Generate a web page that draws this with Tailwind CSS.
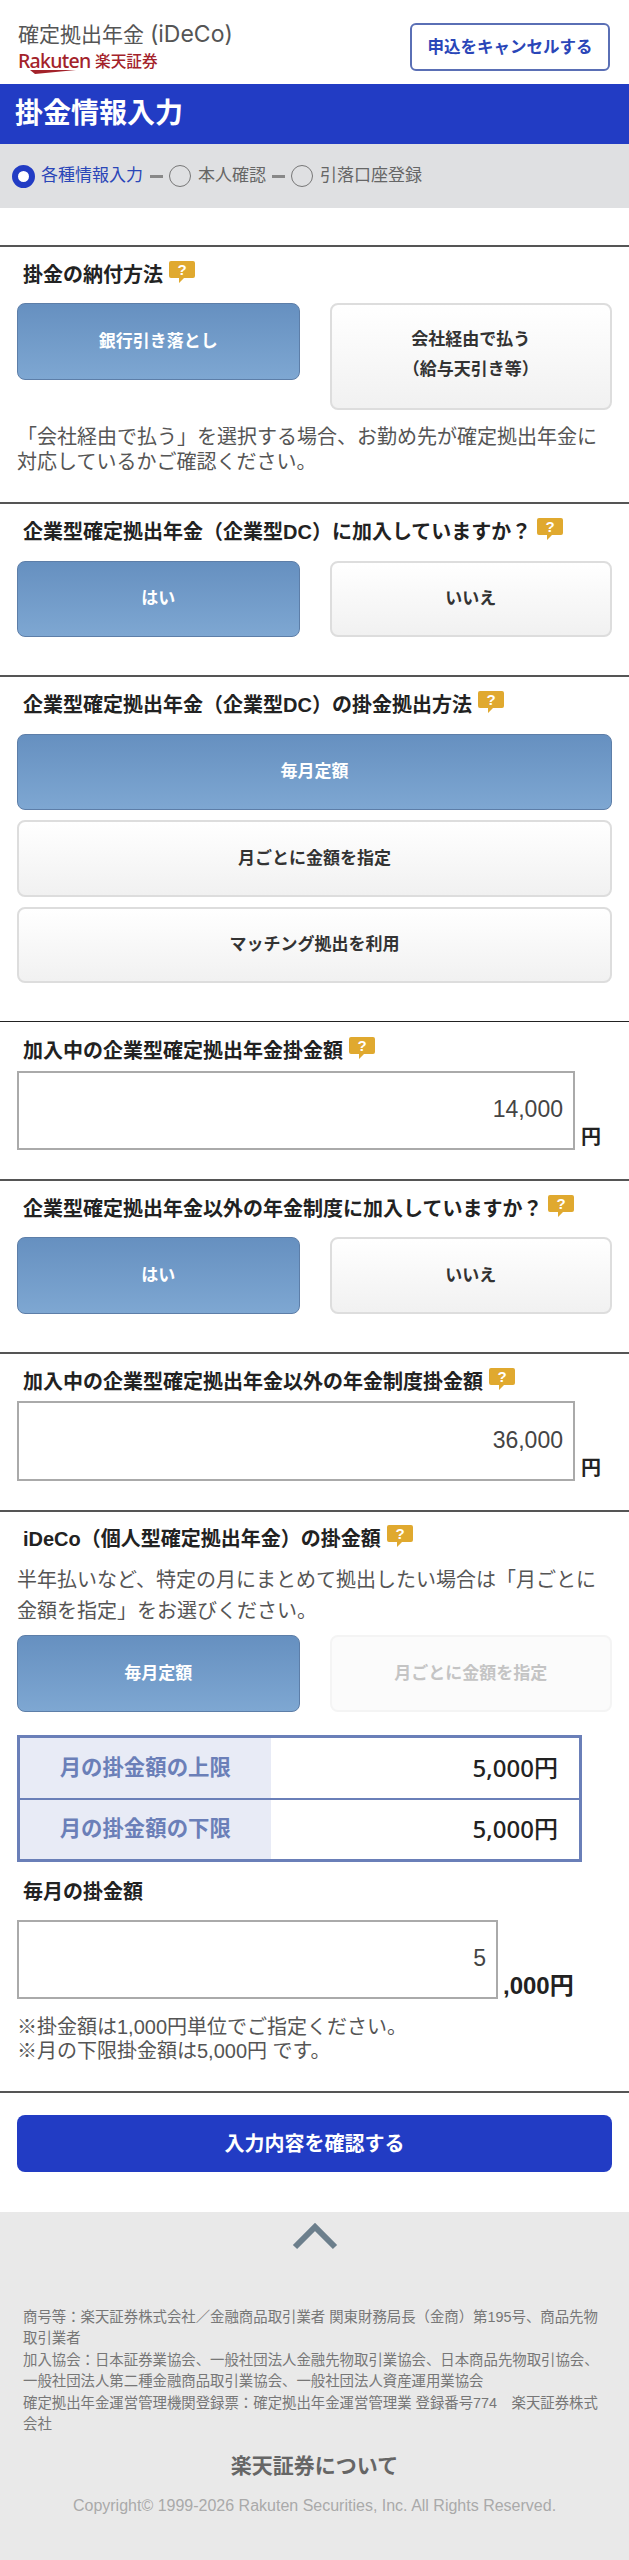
<!DOCTYPE html>
<html lang="ja">
<head>
    <meta charset="UTF-8">
    <meta name="viewport" content="width=device-width, initial-scale=1.0">
    <title>掛金情報入力</title>
    <script src="https://cdn.jsdelivr.net/npm/@tailwindcss/browser@4"></script>
</head>
<body class="bg-white text-[#222] font-['Liberation_Sans','Noto_Sans_CJK_JP',sans-serif]">

    <!-- Header -->
    <header class="h-[84px] flex justify-between items-start pl-[18px] pr-[19px]">
        <div>
            <p class="mt-[21px] text-[21px] leading-[26px] text-[#555] font-['Inter','Noto_Sans_CJK_JP',sans-serif] whitespace-nowrap">確定拠出年金 <span class="text-[23px]">(iDeCo)</span></p>
            <div class="relative flex items-center h-[20px] mt-[3px] text-[#a3222a]">
                <span class="text-[19.5px] leading-[20px] tracking-[-0.7px] font-medium font-['Noto_Sans',sans-serif] w-[77px]">Rakuten</span>
                <span class="text-[15.7px] leading-[20px] font-medium font-['Noto_Sans_CJK_JP',sans-serif]">楽天証券</span>
                <svg class="absolute left-[12px] top-[18px]" width="46" height="6" viewBox="0 0 46 6"><path d="M0 1 L46 1 L5 5 Z" fill="#a3222a"/></svg>
            </div>
        </div>
        <button class="mt-[23px] w-[200px] h-[48px] bg-white border-2 border-[#5a6fb5] rounded-md text-[#2a46b8] text-[16.5px] font-bold">申込をキャンセルする</button>
    </header>

    <!-- Title -->
    <div class="h-[60px] bg-[#223cc4] flex items-center pl-[15px]">
        <h1 class="text-[28px] font-bold text-white">掛金情報入力</h1>
    </div>

    <!-- Steps -->
    <div class="h-[64px] bg-[#dfe0e2] flex items-center pl-[12px] text-[17px] text-[#666] whitespace-nowrap">
        <span class="w-[23px] h-[23px] rounded-full bg-white border-[6px] border-[#223cc4]"></span>
        <span class="ml-[6px] text-[#2a46b8]">各種情報入力</span>
        <span class="ml-[7px] w-[13px] h-[3px] bg-[#888]"></span>
        <span class="ml-[6px] w-[22px] h-[22px] rounded-full border border-[#777]"></span>
        <span class="ml-[7px]">本人確認</span>
        <span class="ml-[6px] w-[13px] h-[3px] bg-[#888]"></span>
        <span class="ml-[6px] w-[22px] h-[22px] rounded-full border border-[#777]"></span>
        <span class="ml-[7px]">引落口座登録</span>
    </div>

    <!-- Payment method -->
    <section class="mt-[37px] border-t-2 border-[#555] px-[17px] pt-[13px] pb-[27px]">
        <div class="h-[30px] mb-[13px] pl-[6px] flex items-center text-[20px] font-bold">
            掛金の納付方法
            <svg class="ml-[6px] -mt-[6px]" width="26" height="22" viewBox="0 0 26 22"><path d="M2 0H24a2 2 0 0 1 2 2V15a2 2 0 0 1-2 2H15L10 22V17H2a2 2 0 0 1-2-2V2a2 2 0 0 1 2-2Z" fill="#e0a92f"/><text x="13" y="14" text-anchor="middle" font-size="15" fill="#fff">?</text></svg>
        </div>
        <div class="grid grid-cols-2 gap-[30px] items-start">
            <button class="h-[77px] rounded-lg border border-[#5d7ea8] bg-linear-to-b from-[#6690c0] to-[#7ea7d2] text-white text-[17px] font-bold">銀行引き落とし</button>
            <button class="h-[107px] rounded-lg border-2 border-[#ddd] bg-linear-to-b from-white to-[#f1f1f1] text-[#333] text-[17px] leading-[30px] font-bold pb-[3px]">会社経由で払う<br>（給与天引き等）</button>
        </div>
        <p class="mt-[15px] text-[20px] leading-[25px] text-[#555]">「会社経由で払う」を選択する場合、お勤め先が確定拠出年金に対応しているかご確認ください。</p>
    </section>

    <!-- Corporate DC -->
    <section class="border-t-2 border-[#555] px-[17px] pt-[13px] pb-[38px]">
        <div class="h-[30px] mb-[14px] pl-[6px] flex items-center text-[20px] font-bold whitespace-nowrap">
            企業型確定拠出年金（企業型DC）に加入していますか？
            <svg class="ml-[6px] -mt-[6px]" width="26" height="22" viewBox="0 0 26 22"><path d="M2 0H24a2 2 0 0 1 2 2V15a2 2 0 0 1-2 2H15L10 22V17H2a2 2 0 0 1-2-2V2a2 2 0 0 1 2-2Z" fill="#e0a92f"/><text x="13" y="14" text-anchor="middle" font-size="15" fill="#fff">?</text></svg>
        </div>
        <div class="grid grid-cols-2 gap-[30px]">
            <button class="h-[76px] rounded-lg border border-[#5d7ea8] bg-linear-to-b from-[#6690c0] to-[#7ea7d2] text-white text-[17px] font-bold">はい</button>
            <button class="h-[76px] rounded-lg border-2 border-[#ddd] bg-linear-to-b from-white to-[#f1f1f1] text-[#333] text-[17px] font-bold">いいえ</button>
        </div>
    </section>

    <!-- DC method -->
    <section class="border-t-2 border-[#555] px-[17px] pt-[13px] pb-[38px]">
        <div class="h-[30px] mb-[14px] pl-[6px] flex items-center text-[20px] font-bold whitespace-nowrap">
            企業型確定拠出年金（企業型DC）の掛金拠出方法
            <svg class="ml-[6px] -mt-[6px]" width="26" height="22" viewBox="0 0 26 22"><path d="M2 0H24a2 2 0 0 1 2 2V15a2 2 0 0 1-2 2H15L10 22V17H2a2 2 0 0 1-2-2V2a2 2 0 0 1 2-2Z" fill="#e0a92f"/><text x="13" y="14" text-anchor="middle" font-size="15" fill="#fff">?</text></svg>
        </div>
        <div class="flex flex-col gap-[10px]">
            <button class="h-[76px] rounded-lg border border-[#5d7ea8] bg-linear-to-b from-[#6690c0] to-[#7ea7d2] text-white text-[17px] font-bold">毎月定額</button>
            <button class="h-[77px] rounded-lg border-2 border-[#ddd] bg-linear-to-b from-white to-[#f1f1f1] text-[#333] text-[17px] font-bold">月ごとに金額を指定</button>
            <button class="h-[76px] rounded-lg border-2 border-[#ddd] bg-linear-to-b from-white to-[#f1f1f1] text-[#333] text-[17px] font-bold">マッチング拠出を利用</button>
        </div>
    </section>

    <!-- DC amount -->
    <section class="border-t border-[#222] px-[17px] pt-[14px] pb-[29px]">
        <div class="h-[30px] mb-[5px] pl-[6px] flex items-center text-[20px] font-bold whitespace-nowrap">
            加入中の企業型確定拠出年金掛金額
            <svg class="ml-[6px] -mt-[6px]" width="26" height="22" viewBox="0 0 26 22"><path d="M2 0H24a2 2 0 0 1 2 2V15a2 2 0 0 1-2 2H15L10 22V17H2a2 2 0 0 1-2-2V2a2 2 0 0 1 2-2Z" fill="#e0a92f"/><text x="13" y="14" text-anchor="middle" font-size="15" fill="#fff">?</text></svg>
        </div>
        <div class="flex items-end">
            <input value="14,000" readonly class="w-[558px] h-[79px] border-2 border-[#aaa] text-right pr-[10px] pb-[2px] text-[23px] text-[#444]">
            <span class="ml-[6px] text-[20px] leading-[26px] font-bold">円</span>
        </div>
    </section>

    <!-- Other pension -->
    <section class="border-t-2 border-[#555] px-[17px] pt-[13px] pb-[38px]">
        <div class="h-[30px] mb-[13px] pl-[6px] flex items-center text-[20px] font-bold whitespace-nowrap">
            企業型確定拠出年金以外の年金制度に加入していますか？
            <svg class="ml-[6px] -mt-[6px]" width="26" height="22" viewBox="0 0 26 22"><path d="M2 0H24a2 2 0 0 1 2 2V15a2 2 0 0 1-2 2H15L10 22V17H2a2 2 0 0 1-2-2V2a2 2 0 0 1 2-2Z" fill="#e0a92f"/><text x="13" y="14" text-anchor="middle" font-size="15" fill="#fff">?</text></svg>
        </div>
        <div class="grid grid-cols-2 gap-[30px]">
            <button class="h-[77px] rounded-lg border border-[#5d7ea8] bg-linear-to-b from-[#6690c0] to-[#7ea7d2] text-white text-[17px] font-bold">はい</button>
            <button class="h-[77px] rounded-lg border-2 border-[#ddd] bg-linear-to-b from-white to-[#f1f1f1] text-[#333] text-[17px] font-bold">いいえ</button>
        </div>
    </section>

    <!-- Other pension amount -->
    <section class="border-t-2 border-[#555] px-[17px] pt-[13px] pb-[29px]">
        <div class="h-[30px] mb-[4px] pl-[6px] flex items-center text-[20px] font-bold whitespace-nowrap">
            加入中の企業型確定拠出年金以外の年金制度掛金額
            <svg class="ml-[6px] -mt-[6px]" width="26" height="22" viewBox="0 0 26 22"><path d="M2 0H24a2 2 0 0 1 2 2V15a2 2 0 0 1-2 2H15L10 22V17H2a2 2 0 0 1-2-2V2a2 2 0 0 1 2-2Z" fill="#e0a92f"/><text x="13" y="14" text-anchor="middle" font-size="15" fill="#fff">?</text></svg>
        </div>
        <div class="flex items-end">
            <input value="36,000" readonly class="w-[558px] h-[80px] border-2 border-[#aaa] text-right pr-[10px] pb-[2px] text-[23px] text-[#444]">
            <span class="ml-[6px] text-[20px] leading-[26px] font-bold">円</span>
        </div>
    </section>

    <!-- iDeCo amount -->
    <section class="border-t-2 border-[#555] px-[17px] pt-[12px] pb-[28px]">
        <div class="h-[30px] pl-[6px] flex items-center text-[20px] font-bold whitespace-nowrap">
            iDeCo（個人型確定拠出年金）の掛金額
            <svg class="ml-[6px] -mt-[6px]" width="26" height="22" viewBox="0 0 26 22"><path d="M2 0H24a2 2 0 0 1 2 2V15a2 2 0 0 1-2 2H15L10 22V17H2a2 2 0 0 1-2-2V2a2 2 0 0 1 2-2Z" fill="#e0a92f"/><text x="13" y="14" text-anchor="middle" font-size="15" fill="#fff">?</text></svg>
        </div>
        <p class="mt-[11px] text-[20px] leading-[31px] text-[#555]">半年払いなど、特定の月にまとめて拠出したい場合は「月ごとに金額を指定」をお選びください。</p>
        <div class="mt-[8px] grid grid-cols-2 gap-[30px]">
            <button class="h-[77px] rounded-lg border border-[#5d7ea8] bg-linear-to-b from-[#6690c0] to-[#7ea7d2] text-white text-[17px] font-bold">毎月定額</button>
            <button class="h-[77px] rounded-lg border-2 border-[#f4f4f4] bg-[#fbfbfb] text-[#c4c4c4] text-[17px] font-bold">月ごとに金額を指定</button>
        </div>
        <table class="mt-[23px] w-[565px] h-[127px] border-[3px] border-[#6a7fb8] border-collapse">
            <tr class="border-b-2 border-[#6a7fb8]">
                <th class="w-[252px] bg-[#e8ebf6] text-[21.4px] font-bold text-[#6b7fb8]">月の掛金額の上限</th>
                <td class="text-right pr-[21px] text-[24px] font-medium font-['Noto_Sans','Noto_Sans_CJK_JP',sans-serif]">5,000円</td>
            </tr>
            <tr>
                <th class="w-[252px] bg-[#e8ebf6] text-[21.4px] font-bold text-[#6b7fb8]">月の掛金額の下限</th>
                <td class="text-right pr-[21px] text-[24px] font-medium font-['Noto_Sans','Noto_Sans_CJK_JP',sans-serif]">5,000円</td>
            </tr>
        </table>
        <h3 class="mt-[15px] h-[30px] mb-[13px] pl-[6px] flex items-center text-[20px] font-bold">毎月の掛金額</h3>
        <div class="flex items-end">
            <input value="5" readonly class="w-[481px] h-[79px] border-2 border-[#aaa] text-right pr-[10px] pb-[2px] text-[23px] text-[#444]">
            <span class="ml-[5px] text-[24px] leading-[26px] font-bold">,000円</span>
        </div>
        <p class="mt-[16px] text-[20px] leading-[24px] text-[#555]">※掛金額は1,000円単位でご指定ください。<br>※月の下限掛金額は5,000円 です。</p>
    </section>

    <!-- Submit -->
    <div class="border-t-2 border-[#555] px-[17px] pt-[22px] pb-[40px]">
        <button class="w-full h-[57px] rounded-lg bg-[#223cc4] text-white text-[20px] font-bold">入力内容を確認する</button>
    </div>

    <!-- Footer -->
    <footer class="bg-[#e9e9e9] h-[348px] pt-[11px]">
        <svg class="mx-auto" width="46" height="27" viewBox="0 0 46 27"><path d="M3 24 L23 4 L43 24" fill="none" stroke="#6c7f8c" stroke-width="6"/></svg>
        <p class="mt-[57px] px-[23px] text-[14.4px] leading-[21.4px] text-[#777]">商号等：楽天証券株式会社／金融商品取引業者 関東財務局長（金商）第195号、商品先物取引業者<br>加入協会：日本証券業協会、一般社団法人金融先物取引業協会、日本商品先物取引協会、一般社団法人第二種金融商品取引業協会、一般社団法人資産運用業協会<br>確定拠出年金運営管理機関登録票：確定拠出年金運営管理業 登録番号774　楽天証券株式会社</p>
        <p class="mt-[16px] text-center text-[21px] leading-[30px] font-bold text-[#666]">楽天証券について</p>
        <p class="mt-[13px] text-center text-[16px] leading-[24px] text-[#aaa]">Copyright© 1999-2026 Rakuten Securities, Inc. All Rights Reserved.</p>
    </footer>

</body>
</html>
